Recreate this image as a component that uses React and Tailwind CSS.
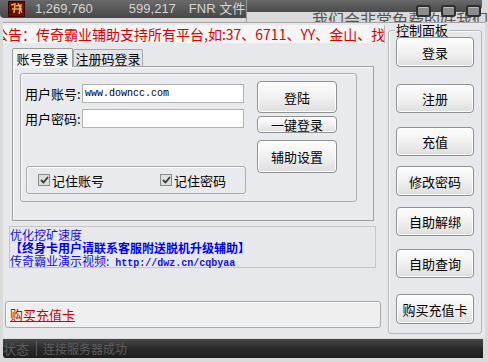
import React from "react";

const cjk = "font-['Noto_Sans_CJK_SC',sans-serif]";

const Btn = ({ children, className }) => (
  <div className={`flex items-center justify-center rounded-[4px] border border-[#8f9090] bg-linear-to-b from-[#fdfdfd] via-[#f1f1f1] to-[#dedede] shadow-[inset_0_0_0_1px_#ffffff] text-[13px] leading-none text-black ${className}`}>
    {children}
  </div>
);

const Check = ({ label }) => (
  <div className="flex items-center gap-[2px]">
    <div className="w-[12px] h-[12px] border border-[#8a8a8a] bg-[#dcdcdc] flex items-center justify-center">
      <svg width="9" height="8" viewBox="0 0 9 8">
        <path d="M1 4 L3.5 6.5 L8 1" stroke="#3a3a3a" strokeWidth="1.8" fill="none" />
      </svg>
    </div>
    <span className="text-[13px] leading-none text-black">{label}</span>
  </div>
);

const Logo = () => (
  <svg width="17" height="16" viewBox="0 0 17 16">
    <rect width="17" height="16" fill="#3a0505" />
    <rect x="1" y="1" width="15" height="14" fill="#6b0d08" />
    <path d="M3 4 L7 3 L6 12 M8 5 L13 4 L11 13 M4 8 L14 8" stroke="#e0b030" strokeWidth="1.6" fill="none" />
    <path d="M10 2 L14 12" stroke="#f3d060" strokeWidth="1" />
  </svg>
);

const WinBtn = () => (
  <div className="w-[15px] h-[12px] rounded-[3px] border-2 border-[#2e2e2e] bg-[#8c8c8c] shadow-[inset_0_1px_0_#bdbdbd]" />
);

const sideButtons = [
  ["登录", "mt-[6px] h-[30px]"],
  ["注册", "mt-[17px] h-[29px]"],
  ["充值", "mt-[14px] h-[29px]"],
  ["修改密码", "mt-[10px] h-[30px]"],
  ["自助解绑", "mt-[11px] h-[29px]"],
  ["自助查询", "mt-[13px] h-[29px]"],
  ["购买充值卡", "mt-[16px] h-[30px]"],
];

export default function App() {
  return (
    <div className={`w-[488px] h-[362px] relative overflow-hidden bg-[#dadada] ${cjk}`}>
      {/* window behind / title strip */}
      <div className="h-[22px] relative flex overflow-hidden">
        <div className="w-[246px] h-[18px] bg-linear-to-b from-[#6a6a6a] to-[#474747] rounded-bl-[4px] flex items-center pl-[8px] font-['Liberation_Sans','Noto_Sans_CJK_SC',sans-serif] text-[13px] text-[#d4d4d4]">
          <Logo />
          <span className="ml-[10px]">1,269,760</span>
          <span className="ml-[36px]">599,217</span>
          <span className="ml-[13px]">FNR 文件</span>
        </div>
        <div className="flex-1 border-l border-[#9a9a9a]">
          <div className="h-[12px] bg-linear-to-b from-[#6a6a6a] to-[#4a4a4a] rounded-br-[6px] mr-[6px]" />
        </div>
        <div className="absolute left-[312px] top-[10px] text-[16px] leading-[18px] text-[#555555] whitespace-nowrap">我们会非常免费的好我们</div>
        <div className="absolute left-[416px] top-[5px] flex gap-[10px]">
          <WinBtn />
          <WinBtn />
          <WinBtn />
        </div>
      </div>

      {/* main window */}
      <div className="ml-[3px] w-[482px] h-[316px] bg-[#e7e8eb] border-t border-[#a4a4a4] flex relative">
        <div className="w-[382px] flex flex-col">
          <div className="mt-[2px] h-[18px] bg-[#f6f6f6] border-r border-[#b4b4b4] overflow-hidden whitespace-nowrap">
            <div className="-ml-[9px] text-[14px] leading-[18px] text-[#e00000]">
              公告：传奇霸业辅助支持所有平台,如:37、6711、YY、金山、找不到的平台请联系客服
            </div>
          </div>

          <div className="mt-[5px] ml-[9px] h-[18px] flex items-end">
            <div className="relative z-10 -mb-px w-[61px] h-[19px] bg-[#f3f3f4] border border-b-0 border-[#9c9c9c] rounded-t-[2px] flex items-center justify-center text-[13px] leading-none text-black">账号登录</div>
            <div className="w-[70px] h-[17px] bg-[#e4e4e6] border border-b-0 border-[#a8a8a8] rounded-t-[2px] flex items-center justify-center text-[13px] leading-none text-black">注册码登录</div>
          </div>

          <div className="ml-[9px] w-[362px] h-[155px] border border-[#a0a0a0] bg-[#e9eaed] shadow-[inset_1px_1px_0_#fafafa]">
            <div className="ml-[7px] mt-[6px] w-[337px] h-[129px] border border-[#acacac] rounded-[3px] shadow-[inset_1px_1px_0_#fafafa] flex">
              <div className="w-[230px] pl-[4px] flex flex-col">
                <div className="mt-[10px] h-[19px] flex items-center">
                  <span className="w-[57px] text-[13px] leading-none text-black">用户账号:</span>
                  <div className="w-[162px] h-[19px] bg-white border border-[#b3b3b3] flex items-center pl-[2px] font-['Liberation_Mono',monospace] text-[10px] text-black">www.downcc.com</div>
                </div>
                <div className="mt-[6px] h-[19px] flex items-center">
                  <span className="w-[57px] text-[13px] leading-none text-black">用户密码:</span>
                  <div className="w-[162px] h-[19px] bg-white border border-[#b3b3b3]" />
                </div>
                <div className="mt-auto mb-[7px] ml-[1px] w-[220px] h-[28px] border border-[#acacac] rounded-[3px] shadow-[inset_1px_1px_0_#fafafa] flex items-center pl-[11px]">
                  <div className="w-[122px]">
                    <Check label="记住账号" />
                  </div>
                  <Check label="记住密码" />
                </div>
              </div>
              <div className="ml-[6px] w-[80px] flex flex-col">
                <Btn className="mt-[7px] h-[32px]">登陆</Btn>
                <Btn className="mt-[3px] h-[17px]">一键登录</Btn>
                <Btn className="mt-[7px] h-[33px]">辅助设置</Btn>
              </div>
            </div>
          </div>

          <div className="mt-[5px] ml-[6px] w-[367px] h-[42px] border border-[#c6c6c6] text-[12px] leading-[13px] text-[#1010e8] whitespace-nowrap">
            <div className="mt-[1px]">优化挖矿速度</div>
            <div className="text-[#0000f0] font-bold">【终身卡用户请联系客服附送脱机升级辅助】</div>
            <div>
              传奇霸业演示视频:
              <span className="font-['Liberation_Mono',monospace] text-[10px] font-bold"> http://dwz.cn/cqbyaa</span>
            </div>
          </div>

          <div className="mt-[33px] ml-[2px] w-[376px] h-[27px] border border-[#a8a8a8] rounded-[3px] bg-[#efeff0] shadow-[inset_1px_1px_0_#ffffff] flex items-center pl-[4px]">
            <span className="text-[13px] leading-none text-[#d00000] underline">购买充值卡</span>
          </div>
        </div>

        <div className="ml-[3px] mt-[7px] w-[94px] h-[304px] border border-[#b6b6b6] rounded-[3px] shadow-[inset_1px_1px_0_#fafafa] relative flex flex-col pl-[7px]">
          <span className="absolute -top-[8px] left-[6px] px-[1px] bg-[#e7e8eb] text-[13px] leading-[14px] text-black">控制面板</span>
          {sideButtons.map(([label, cls]) => (
            <Btn key={label} className={`w-[78px] ${cls}`}>{label}</Btn>
          ))}
        </div>
      </div>

      {/* status bar */}
      <div className="mt-[1px] ml-[3px] w-[480px] h-[19px] bg-linear-to-b from-[#4a4a4a] via-[#2a2a2a] to-[#1c1c1c] rounded-bl-[3px] flex items-center text-[#5e5e5e] whitespace-nowrap">
        <span className="w-[33px] text-[13px] leading-none">状态</span>
        <div className="w-px h-[15px] bg-[#5a5a5a]" />
        <span className="ml-[6px] text-[12px] leading-none">连接服务器成功</span>
      </div>
    </div>
  );
}
